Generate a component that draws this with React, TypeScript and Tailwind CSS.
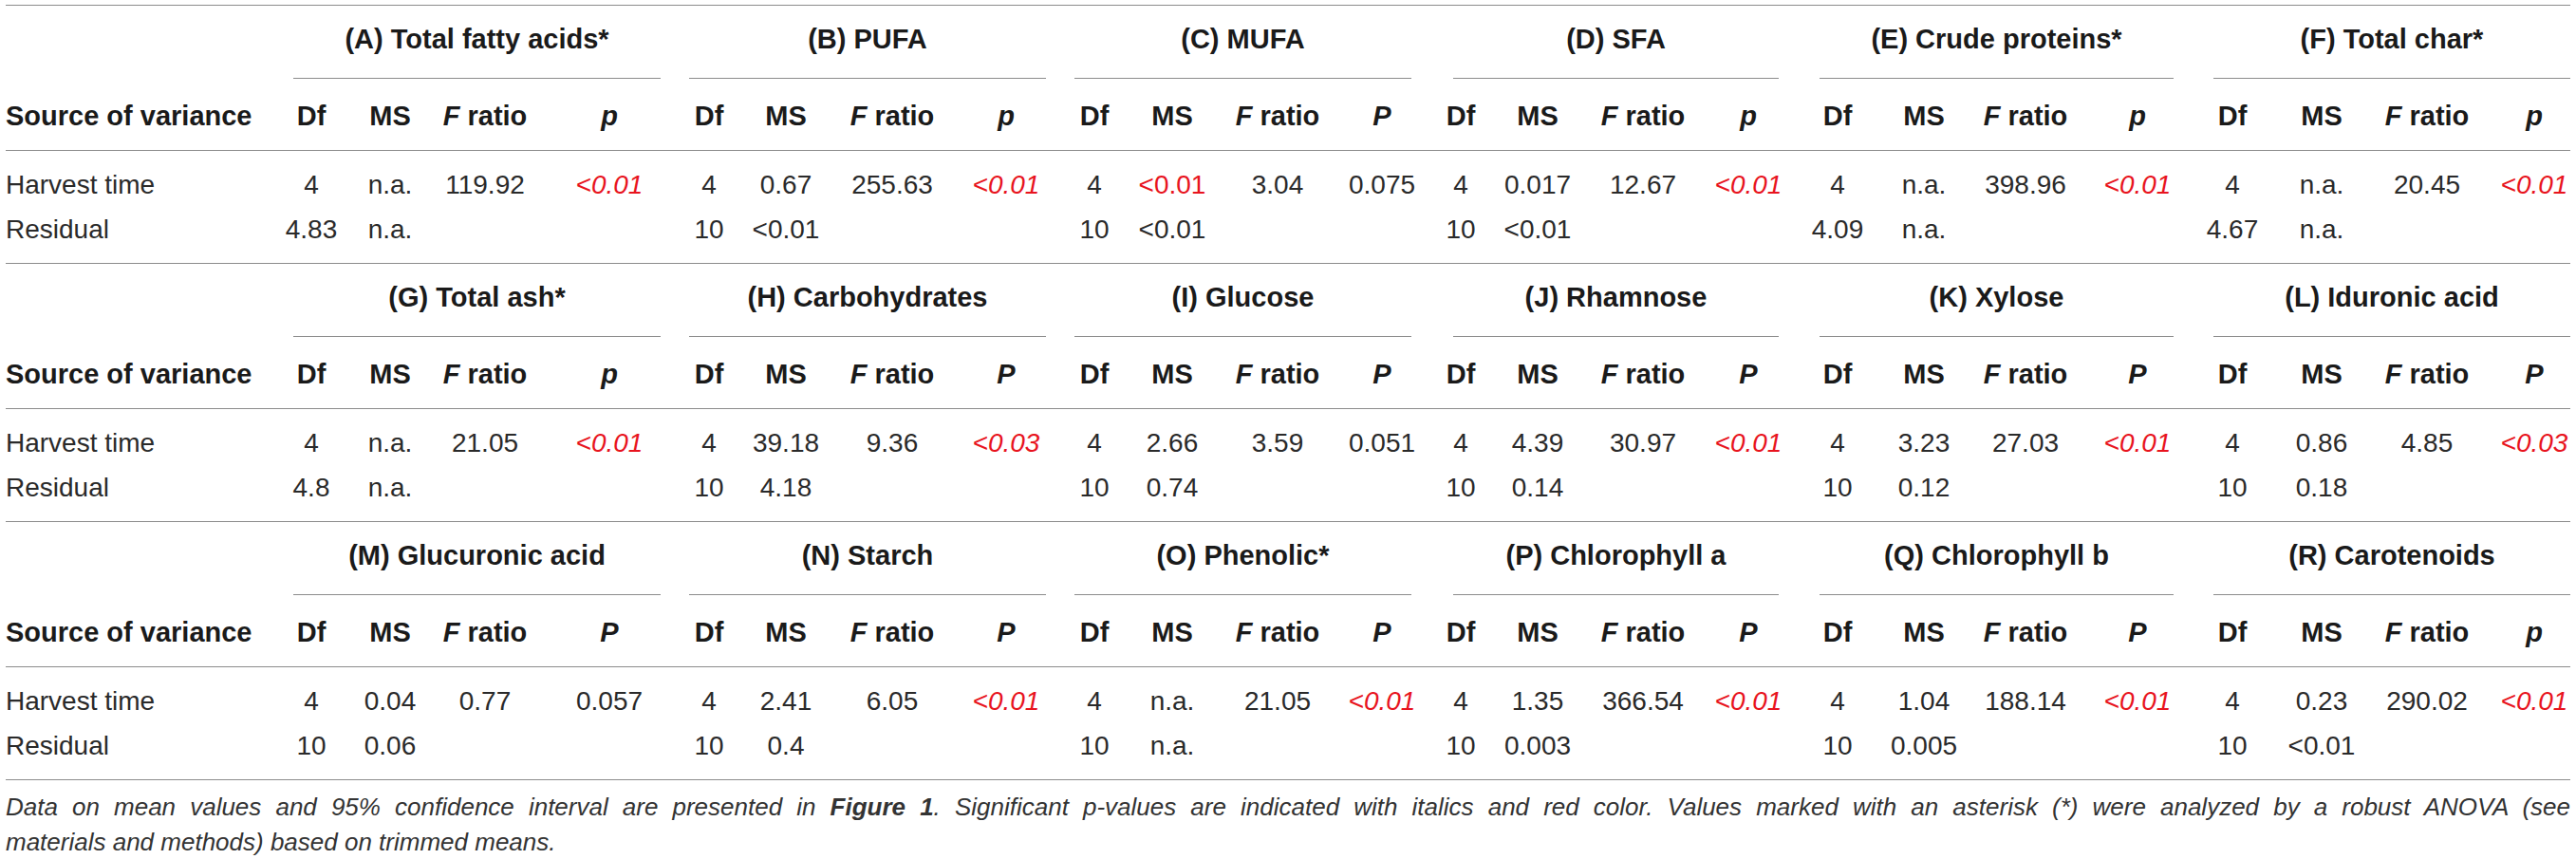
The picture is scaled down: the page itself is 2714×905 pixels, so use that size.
import React from "react";

type Group = {
  title: string;
  p: string;
  harvest: [string, string, string, string];
  residual: [string, string];
  redMs?: boolean;
};

// 25 tracks: source column + 6 groups x (Df, MS, F ratio, p)
const COLS =
  "grid-cols-[277px_90px_76px_124px_138px_72px_90px_134px_106px_80px_84px_138px_82px_84px_78px_144px_78px_110px_72px_142px_94px_106px_82px_140px_86px]";

const GROUP_BOX = [
  "w-[387px]",
  "ml-[30px] w-[376px]",
  "ml-[30px] w-[355px]",
  "ml-[44px] w-[343px]",
  "ml-[43px] w-[373px]",
  "ml-[42px] w-[376px]",
];

const BLOCKS: Group[][] = [
  [
    { title: "(A) Total fatty acids*", p: "p", harvest: ["4", "n.a.", "119.92", "<0.01"], residual: ["4.83", "n.a."] },
    { title: "(B) PUFA", p: "p", harvest: ["4", "0.67", "255.63", "<0.01"], residual: ["10", "<0.01"] },
    { title: "(C) MUFA", p: "P", harvest: ["4", "<0.01", "3.04", "0.075"], residual: ["10", "<0.01"], redMs: true },
    { title: "(D) SFA", p: "p", harvest: ["4", "0.017", "12.67", "<0.01"], residual: ["10", "<0.01"] },
    { title: "(E) Crude proteins*", p: "p", harvest: ["4", "n.a.", "398.96", "<0.01"], residual: ["4.09", "n.a."] },
    { title: "(F) Total char*", p: "p", harvest: ["4", "n.a.", "20.45", "<0.01"], residual: ["4.67", "n.a."] },
  ],
  [
    { title: "(G) Total ash*", p: "p", harvest: ["4", "n.a.", "21.05", "<0.01"], residual: ["4.8", "n.a."] },
    { title: "(H) Carbohydrates", p: "P", harvest: ["4", "39.18", "9.36", "<0.03"], residual: ["10", "4.18"] },
    { title: "(I) Glucose", p: "P", harvest: ["4", "2.66", "3.59", "0.051"], residual: ["10", "0.74"] },
    { title: "(J) Rhamnose", p: "P", harvest: ["4", "4.39", "30.97", "<0.01"], residual: ["10", "0.14"] },
    { title: "(K) Xylose", p: "P", harvest: ["4", "3.23", "27.03", "<0.01"], residual: ["10", "0.12"] },
    { title: "(L) Iduronic acid", p: "P", harvest: ["4", "0.86", "4.85", "<0.03"], residual: ["10", "0.18"] },
  ],
  [
    { title: "(M) Glucuronic acid", p: "P", harvest: ["4", "0.04", "0.77", "0.057"], residual: ["10", "0.06"] },
    { title: "(N) Starch", p: "P", harvest: ["4", "2.41", "6.05", "<0.01"], residual: ["10", "0.4"] },
    { title: "(O) Phenolic*", p: "P", harvest: ["4", "n.a.", "21.05", "<0.01"], residual: ["10", "n.a."] },
    { title: "(P) Chlorophyll a", p: "P", harvest: ["4", "1.35", "366.54", "<0.01"], residual: ["10", "0.003"] },
    { title: "(Q) Chlorophyll b", p: "P", harvest: ["4", "1.04", "188.14", "<0.01"], residual: ["10", "0.005"] },
    { title: "(R) Carotenoids", p: "p", harvest: ["4", "0.23", "290.02", "<0.01"], residual: ["10", "<0.01"] },
  ],
];

function AnovaBlock({ groups }: { groups: Group[] }) {
  return (
    <section className="border-b border-[#8c8c8c]">
      {/* group titles with their underline */}
      <div className="flex h-[77px] pl-[303px]">
        {groups.map((g, i) => (
          <div
            key={g.title}
            className={`${GROUP_BOX[i]} flex items-center justify-center border-b border-[#8c8c8c] pb-[4px] text-[29px] font-bold text-[#1a1a1a] whitespace-nowrap`}
          >
            {g.title}
          </div>
        ))}
      </div>

      {/* column headers */}
      <div className={`grid ${COLS} h-[76px] items-center border-b border-[#8c8c8c] pt-[5px] text-[29px] font-bold text-[#1a1a1a]`}>
        <div className="whitespace-nowrap">Source of variance</div>
        {groups.map((g) => (
          <React.Fragment key={g.title}>
            <div className="text-center">Df</div>
            <div className="text-center">MS</div>
            <div className="text-center whitespace-nowrap">
              <i>F</i> ratio
            </div>
            <div className="text-center">
              <i>{g.p}</i>
            </div>
          </React.Fragment>
        ))}
      </div>

      {/* rows */}
      <div className="pt-[12px] pb-[12px] text-[28px] text-[#2a2a2a]">
        <div className={`grid ${COLS} h-[47px] items-center`}>
          <div>Harvest time</div>
          {groups.map((g) => (
            <React.Fragment key={g.title}>
              <div className="text-center">{g.harvest[0]}</div>
              <div className={`text-center ${g.redMs ? "text-[#e8141e]" : ""}`}>{g.harvest[1]}</div>
              <div className="text-center">{g.harvest[2]}</div>
              <div className={`text-center ${g.harvest[3].startsWith("<") ? "italic text-[#e8141e]" : ""}`}>
                {g.harvest[3]}
              </div>
            </React.Fragment>
          ))}
        </div>
        <div className={`grid ${COLS} h-[47px] items-center`}>
          <div>Residual</div>
          {groups.map((g) => (
            <React.Fragment key={g.title}>
              <div className="text-center">{g.residual[0]}</div>
              <div className="text-center">{g.residual[1]}</div>
              <div />
              <div />
            </React.Fragment>
          ))}
        </div>
      </div>
    </section>
  );
}

export default function App() {
  return (
    <div className="min-h-screen bg-white pl-[6px] pt-[5px] font-['Liberation_Sans',Arial,sans-serif]">
      <div className="w-[2702px] border-t border-[#8c8c8c]">
        {BLOCKS.map((groups, i) => (
          <AnovaBlock key={i} groups={groups} />
        ))}
        {/* table footnote, broken where the reference breaks it */}
        <div className="pt-[10px] text-[26px] italic leading-[37px] text-[#333]">
          <div className="whitespace-nowrap text-justify [text-align-last:justify]">
            Data on mean values and 95% confidence interval are presented in <b>Figure 1</b>. Significant p-values are
            indicated with italics and red color. Values marked with an asterisk (*) were analyzed by a robust ANOVA
            (see
          </div>
          <div>materials and methods) based on trimmed means.</div>
        </div>
      </div>
    </div>
  );
}
